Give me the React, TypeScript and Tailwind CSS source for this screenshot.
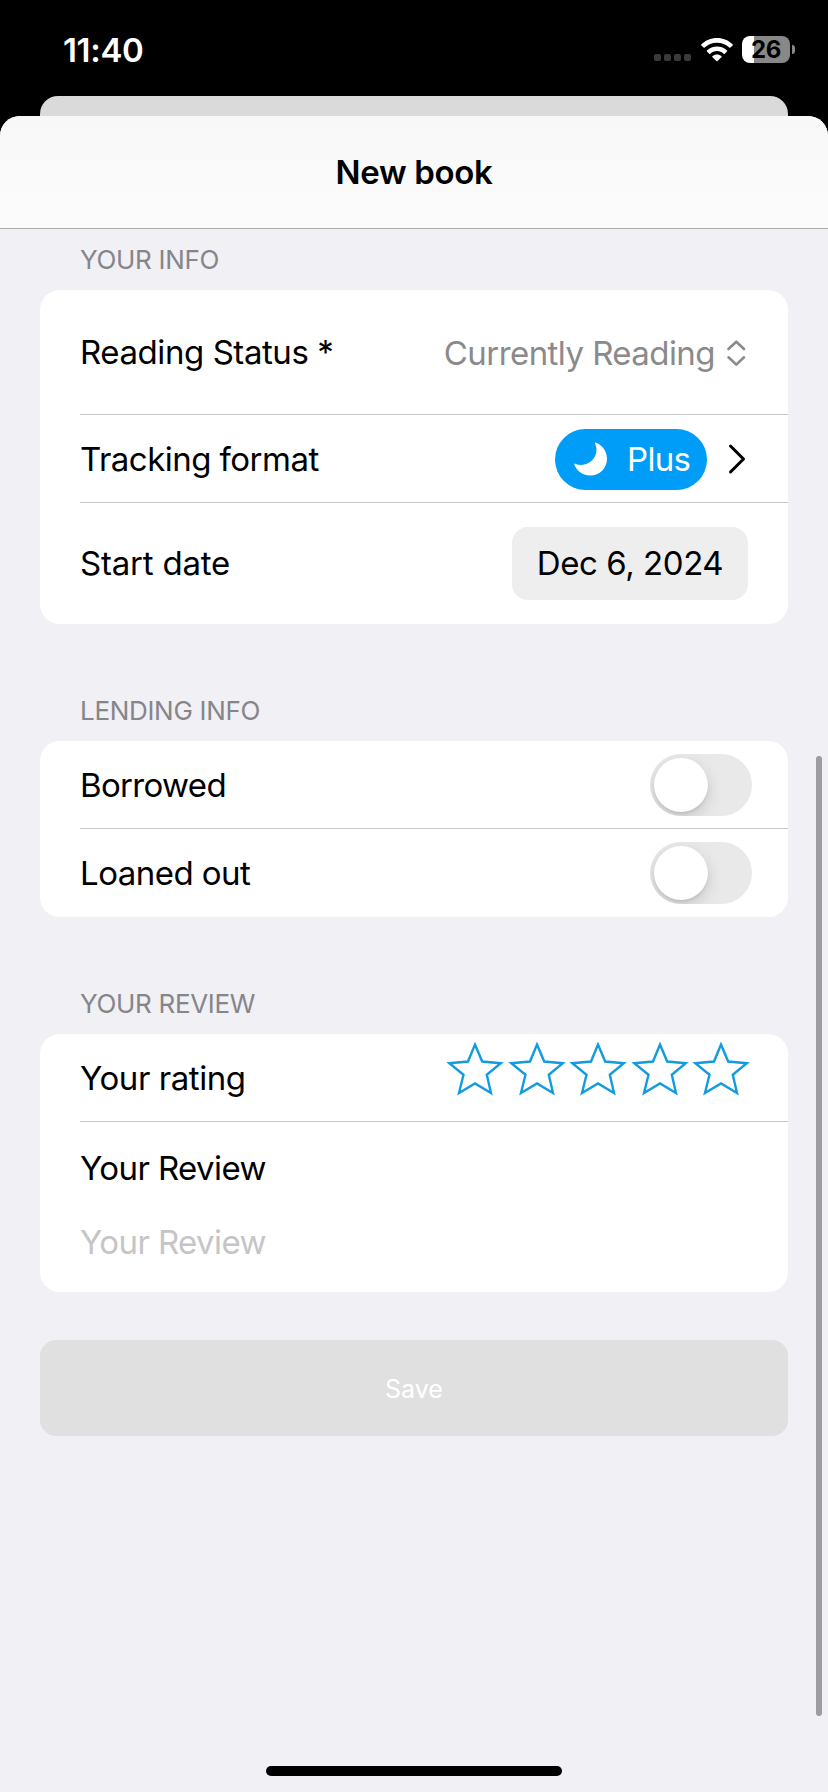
import type { ReactNode } from "react";

const stars = [1, 2, 3, 4, 5];

function StatusBar() {
  return (
    <div className="flex h-24 items-center justify-between pl-[63px] pr-[33px] pt-[3px] text-white">
      <span className="pt-[1px] text-[33px] font-semibold leading-none tracking-[-0.01em]">11:40</span>
      <div className="flex items-center">
        {/* No signal */}
        <div className="mr-[10px] mt-[16px] flex gap-[3px]">
          {[0, 1, 2, 3].map((dot) => (
            <span key={dot} className="size-[7px] rounded-[2px] bg-[#3a3a3a]" />
          ))}
        </div>
        <svg className="mr-[9px] h-[24px] w-[32px]" viewBox="0 0 32 24" fill="currentColor">
          <path d="M16 0C22.1 0 27.6 2.4 31.6 6.3c.3.3.3.8 0 1.1l-2.2 2.2c-.3.3-.8.3-1.1 0C25.1 6.500 20.800 4.800 16 4.800S6.900 6.500 3.700 9.600c-.3.3-.8.3-1.1 0L.4 7.400c-.3-.3-.3-.8 0-1.1C4.400 2.400 9.900 0 16 0z" />
          <path d="M16 8.400c3.900 0 7.400 1.500 10 4 .3.3.3.8 0 1.100l-2.200 2.200c-.3.3-.8.3-1.100 0-1.800-1.600-4.100-2.600-6.700-2.600s-4.900 1-6.700 2.600c-.3.3-.8.3-1.100 0L6 13.500c-.3-.3-.3-.8 0-1.100 2.600-2.500 6.100-4 10-4z" />
          <path d="M16 16.500c1.700 0 3.200.6 4.400 1.600.3.300.3.800 0 1.100l-3.900 3.900c-.3.300-.8.300-1.100 0l-3.900-3.900c-.3-.300-.3-.800 0-1.100 1.200-1 2.800-1.600 4.500-1.600z" />
        </svg>
        <div className="flex h-[27px] w-[48px] items-center justify-center rounded-[8px] bg-[linear-gradient(to_right,#fff_12px,#888_12px)]">
          <span className="text-[24px] font-bold leading-none tracking-[-0.01em] text-black">26</span>
        </div>
        <span className="ml-[2px] h-[9px] w-[3px] rounded-r-full bg-[#888]" />
      </div>
    </div>
  );
}

function Section({ title, className, children }: { title: string; className: string; children: ReactNode }) {
  return (
    <section className={className}>
      <h2 className="pl-10 text-[26px] leading-[30px] tracking-[-0.012em] text-[#85858a]">{title}</h2>
      <div className="mt-[15px] rounded-[20px] bg-white pl-10">{children}</div>
    </section>
  );
}

function Toggle() {
  return (
    <button className="mr-9 h-[62px] w-[102px] overflow-hidden rounded-full bg-[#e9e9e9] p-1">
      <span className="block size-[54px] rounded-full bg-white shadow-[0_6px_16px_rgba(0,0,0,0.15),0_2px_3px_rgba(0,0,0,0.08)]" />
    </button>
  );
}

export default function App() {
  return (
    <div className="flex h-[1792px] w-[828px] flex-col bg-black font-['Inter',sans-serif] text-[33px] leading-[40px] tracking-[-0.013em] text-black">
      <StatusBar />

      {/* Sheet underneath */}
      <div className="mx-10 h-5 rounded-t-[18px] bg-[#dadada]" />

      <main className="relative flex-1 overflow-hidden rounded-t-[20px] bg-[#f1f0f5]">
        <header className="flex h-[113px] items-center justify-center border-b border-[#a9a9ac] bg-linear-to-b from-[#f8f8f8] to-[#fbfbfb]">
          <h1 className="font-semibold tracking-[-0.01em]">New book</h1>
        </header>

        <div className="px-10">
          <Section title="YOUR INFO" className="pt-4">
            <div className="flex h-[125px] items-center justify-between border-b border-[#c6c6c8] pr-[42px]">
              <span>Reading Status *</span>
              <div className="flex items-center pt-[2px] text-[#8a8a8c]">
                <span className="tracking-[-0.017em]">Currently Reading</span>
                <svg className="ml-[11px] h-[28px] w-[20px]" viewBox="0 0 20 28" fill="none" stroke="currentColor" strokeWidth="2.6" strokeLinecap="round" strokeLinejoin="round">
                  <path d="M2.500 10 10.300 2.700 18 10M2.500 18.300 10.300 25.600 18 18.300" />
                </svg>
              </div>
            </div>
            <div className="flex h-[88px] items-center justify-between border-b border-[#c6c6c8] pr-[41px]">
              <span className="tracking-[-0.016em]">Tracking format</span>
              <div className="flex items-center pt-[1px]">
                <div className="flex h-[61px] w-[152px] items-center rounded-full bg-[#009df8] pl-[19px] text-white">
                  <svg className="mr-[19px] size-[34px]" viewBox="0 0 34 34" fill="currentColor">
                    <path d="M21.300.5C28.500 3 33 9.300 33 16.700 33 26 25.500 33.500 16.500 33.500 8.800 33.500 2.300 29 .3 22.300c-.1-.6.500-.9 1-.6C3 22.500 4.900 22.900 7 22.900c8.600 0 15.500-6.700 15.500-15.100 0-2.300-.5-4.300-1.500-6.300-.3-.6-.1-1.200.3-1z" />
                  </svg>
                  <span className="tracking-[-0.02em]">Plus</span>
                </div>
                <svg className="ml-[20px] h-[32px] w-[20px]" viewBox="0 0 20 32" fill="none" stroke="currentColor" strokeWidth="3" strokeLinecap="round" strokeLinejoin="round">
                  <path d="M3.500 3 16.500 16 3.500 29" />
                </svg>
              </div>
            </div>
            <div className="flex h-[121px] items-center justify-between pr-10">
              <span className="pb-[2px] tracking-[-0.006em]">Start date</span>
              <div className="flex h-[73px] w-[236px] items-center justify-center rounded-[16px] bg-[#eeeeef] pb-[2px]">
                Dec 6, 2024
              </div>
            </div>
          </Section>

          <Section title="LENDING INFO" className="pt-[72px]">
            <div className="flex h-[88px] items-center justify-between border-b border-[#c6c6c8]">
              <span className="tracking-[-0.02em]">Borrowed</span>
              <Toggle />
            </div>
            <div className="flex h-[88px] items-center justify-between">
              <span className="tracking-[-0.016em]">Loaned out</span>
              <Toggle />
            </div>
          </Section>

          <Section title="YOUR REVIEW" className="pt-[72px]">
            <div className="flex h-[88px] items-center justify-between border-b border-[#c6c6c8] pr-[37px]">
              <span>Your rating</span>
              <div className="flex gap-[1.5px] pb-[19px]">
                {stars.map((star) => (
                  <svg key={star} className="h-[56px] w-[60px]" viewBox="0 0 60 56" fill="none" stroke="#149bdf" strokeWidth="2.4">
                    <path d="M30 4.500 37.200 21.500 55.800 23.200 41.800 34.800 46 53 30 43.500 14 53 18.500 34.800 4.300 23.200 23 21.500z" />
                  </svg>
                ))}
              </div>
            </div>
            <div className="flex h-[170px] flex-col gap-[34px] pt-[26px] tracking-[-0.018em]">
              <span>Your Review</span>
              <span className="text-[#c5c5c7]">Your Review</span>
            </div>
          </Section>

          <button className="mt-12 flex h-24 w-full items-center justify-center rounded-[16px] bg-[#e0e0e0] pt-[2px] text-[25px] tracking-[0em] text-white">
            Save
          </button>
        </div>

        {/* Scroll indicator */}
        <div className="absolute right-[6px] top-[640px] h-[960px] w-[6px] rounded-full bg-[#9d9da0]" />
        {/* Home indicator */}
        <div className="absolute bottom-4 left-[266px] h-[10px] w-[296px] rounded-full bg-black" />
      </main>
    </div>
  );
}
